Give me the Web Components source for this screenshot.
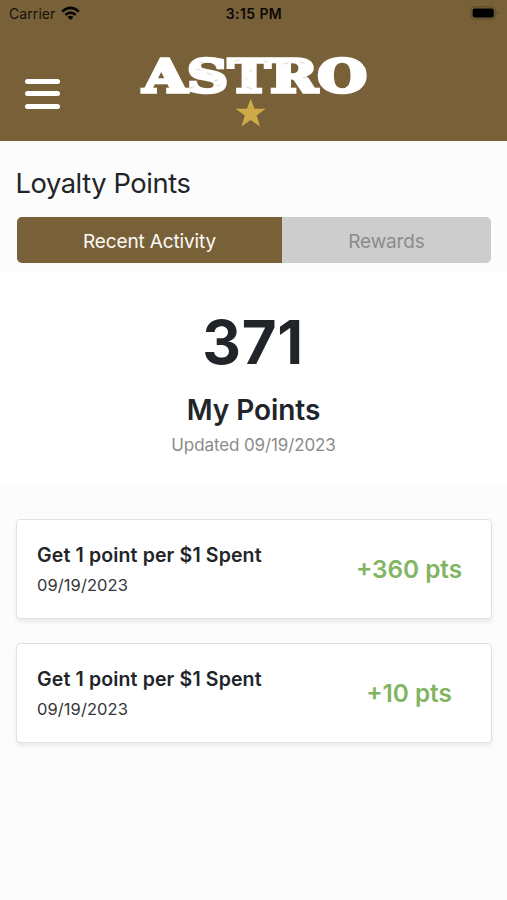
<!DOCTYPE html>
<html lang="en">
<head>
<meta charset="utf-8">
<title>Loyalty Points</title>
<style>
html,body{margin:0;height:100%;background:#fcfcfc}
body{font-family:Inter,"Liberation Sans",sans-serif;color:#212529}
</style>
</head>
<body>
<loyalty-app></loyalty-app>
<script>
const define = (name, markup) => customElements.define(name, class extends HTMLElement {
  constructor() {
    super();
    this.attachShadow({ mode: 'open' }).innerHTML = markup;
  }
});

define('status-bar', `<style>
:host{display:grid;grid-template-columns:1fr auto 1fr;align-items:center;height:28px;padding:0 8px 0 9px;box-sizing:border-box;color:#15110a;font-size:14px;line-height:28px}
.left{display:flex;align-items:center;gap:6px}
.carrier{letter-spacing:.08px}
.time{font-weight:600;font-size:14px;letter-spacing:.4px;color:#0b0906}
svg{display:block}
.wifi{margin-top:-2px}
.battery{justify-self:end;margin-top:-2px}
</style>
<div class="left"><span class="carrier">Carrier</span>
<svg class="wifi" width="19" height="15" viewBox="0 0 19 15"><g fill="none" stroke="#060503" stroke-width="2.6"><path d="M1.2 5.6Q9.5 -1.9 17.8 5.6"/><path d="M4.3 8.9Q9.5 4.2 14.7 8.9"/></g><path d="M6.5 11.1Q9.5 8.6 12.5 11.1L9.5 14.1Z" fill="#060503"/></svg></div>
<span class="time">3:15 PM</span>
<svg class="battery" width="29" height="14" viewBox="0 0 29 14"><rect x=".8" y=".8" width="24.6" height="12.2" rx="3.4" fill="none" stroke="#59492c"/><rect x="2.6" y="2.6" width="21.2" height="8.8" rx="1.8" fill="#000"/><path d="M27 4.8Q28.8 7 27 9.2Z" fill="#493b23"/></svg>`);

define('brand-logo', `<style>:host{display:block;width:232px;height:100px}svg{display:block}</style>
<svg width="232" height="100" viewBox="0 -24 232 100">
<text x="5" y="39.7" font-family="DejaVu Serif" font-weight="700" font-size="45.5" textLength="224" lengthAdjust="spacingAndGlyphs" fill="#fff" stroke="#fff" stroke-width="3.4" stroke-linejoin="miter">ASTRO</text>
<g stroke="#786139" stroke-width=".6" fill="none" stroke-linecap="round" opacity=".42">
<path d="M62 11l3-1M58 17l4 1M69 21l5 2M52 36l4-1M76 29l4-1M79 34l3-1M97 9l4-1M111 20l3-2M107 26l2 1M109 35l5 2M126 9l4 1M145 12l5-1M152 35l4-1M162 10l4 1M165 26l4-1M174 33l2 2"/></g>
<path transform="translate(112.7 61.6)" d="M0 -15.2 3.8 -4.9 15 -4.8 5.9 2 9.3 12.8 0 6.4 -9.3 12.8 -5.9 2 -15 -4.8 -3.8 -4.9Z" fill="#cfaa49"/>
</svg>`);

define('menu-button', `<style>:host{display:grid;align-self:start;gap:7.2px;width:35px}i{display:block;height:5.2px;border-radius:3px;background:#fff}</style><i></i><i></i><i></i>`);

define('app-header', `<style>
:host{display:block;height:141px;background:#786139}
.bar{display:grid;grid-template-columns:35px 232px;column-gap:78px;padding:0 0 0 25px}
menu-button{margin-top:50.8px}
</style><status-bar></status-bar><div class="bar"><menu-button></menu-button><brand-logo></brand-logo></div>`);

define('tab-item', `<style>
:host{display:flex;align-items:center;justify-content:center;height:46px;background:#cdcdcd;color:#8b8b8b;font-size:19px;letter-spacing:-.14px;padding-top:2px;box-sizing:border-box}
:host([active]){background:#786139;color:#fdfaf5}
</style><slot></slot>`);

define('tab-strip', `<style>:host{display:grid;grid-template-columns:265px 209px;height:46px;border-radius:5px;overflow:hidden}</style><slot></slot>`);

define('points-summary', `<style>
:host{display:flex;flex-direction:column;align-items:center;height:212px;background:#fff;box-sizing:border-box;padding-top:35px}
.total{font-size:60px;font-weight:700;line-height:72px;letter-spacing:.7px;margin-left:-1px}
.label{font-size:28px;font-weight:600;line-height:36px;margin-top:14px;letter-spacing:-.05px}
.date{font-size:17px;line-height:24px;margin-top:5px;color:#8b8b8b;letter-spacing:-.12px}
</style><div class="total"><slot name="total"></slot></div><div class="label"><slot name="label"></slot></div><div class="date"><slot name="date"></slot></div>`);

define('activity-card', `<style>
:host{display:grid;grid-template-columns:1fr 164px;align-items:center;height:100px;box-sizing:border-box;border:1px solid #e0e1e1;border-radius:4px;background:#fff;box-shadow:0 3px 4px rgba(0,0,0,.07);padding:0 0 0 20px}
.title{font-size:19.5px;font-weight:600;line-height:28px;white-space:nowrap;letter-spacing:.14px}
.date{font-size:16.5px;line-height:24px;margin-top:4px;color:#343639;letter-spacing:.08px}
.points{color:#82b562;font-size:24.3px;font-weight:600;text-align:center;letter-spacing:0}
</style><div><div class="title"><slot></slot></div><div class="date"><slot name="date"></slot></div></div><div class="points"><slot name="points"></slot></div>`);

define('loyalty-app', `<style>
:host{display:block}
h1{margin:0;padding:25px 15.5px 0;font-weight:400;font-size:27.3px;line-height:36px;letter-spacing:-.42px}
tab-strip{margin:15px 16px 0 17px}
points-summary{margin-top:8px}
.list{display:grid;gap:24.5px;padding:35.5px 15px 0 16px}
</style>
<app-header></app-header>
<h1>Loyalty Points</h1>
<tab-strip><tab-item active>Recent Activity</tab-item><tab-item>Rewards</tab-item></tab-strip>
<points-summary><span slot="total">371</span><span slot="label">My Points</span><span slot="date">Updated 09/19/2023</span></points-summary>
<div class="list">
<activity-card>Get 1 point per $1 Spent<span slot="date">09/19/2023</span><span slot="points">+360 pts</span></activity-card>
<activity-card>Get 1 point per $1 Spent<span slot="date">09/19/2023</span><span slot="points">+10 pts</span></activity-card>
</div>`);
</script>
</body>
</html>
